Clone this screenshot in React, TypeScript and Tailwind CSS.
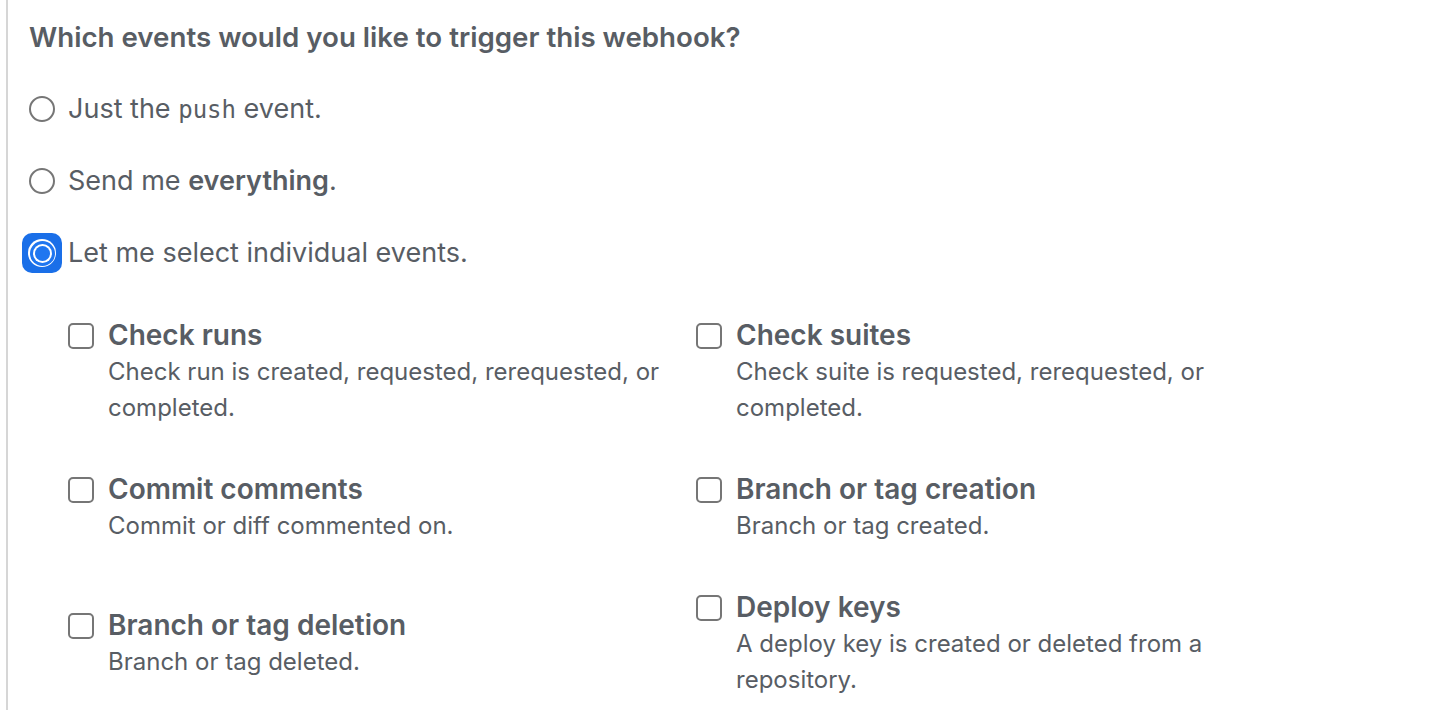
import React from 'react';

type EventItem = { title: string; desc: string; extra?: string };

const leftEvents: EventItem[] = [
  { title: 'Check runs', desc: 'Check run is created, requested, rerequested, or completed.' },
  { title: 'Commit comments', desc: 'Commit or diff commented on.', extra: 'mb-[62px]' },
  { title: 'Branch or tag deletion', desc: 'Branch or tag deleted.' },
];

const rightEvents: EventItem[] = [
  { title: 'Check suites', desc: 'Check suite is requested, rerequested, or completed.' },
  { title: 'Branch or tag creation', desc: 'Branch or tag created.' },
  { title: 'Deploy keys', desc: 'A deploy key is created or deleted from a repository.' },
];

const Radio: React.FC<{ checked?: boolean }> = ({ checked }) =>
  checked ? (
    <span className="-ml-[7px] mr-[-7px] flex h-[40px] w-[40px] shrink-0 items-center justify-center rounded-[10px] bg-[#1a6fe8]">
      <span className="flex h-[28px] w-[28px] items-center justify-center rounded-full bg-white">
        <span className="flex h-[25px] w-[25px] items-center justify-center rounded-full bg-[#1f76f0]">
          <span className="flex h-[19px] w-[19px] items-center justify-center rounded-full bg-white">
            <span className="h-[15px] w-[15px] rounded-full bg-[#1f76f0]" />
          </span>
        </span>
      </span>
    </span>
  ) : (
    <span className="h-[26px] w-[26px] shrink-0 rounded-full border-2 border-[#767676] bg-white" />
  );

const RadioRow: React.FC<{ checked?: boolean; children: React.ReactNode }> = ({ checked, children }) => (
  <label className="flex h-[72px] items-center gap-[13px]">
    <Radio checked={checked} />
    <span className="text-[27px]">{children}</span>
  </label>
);

const EventCheck: React.FC<{ item: EventItem }> = ({ item }) => (
  <div className={`flex gap-[14px] ${item.extra ?? 'mb-[44px]'}`}>
    <span className="mt-[7px] h-[26px] w-[26px] shrink-0 rounded-[5px] border-2 border-[#767676] bg-white" />
    <div>
      <div className="text-[28px] font-semibold leading-[38px]">{item.title}</div>
      <div className="max-w-[560px] text-[24px] leading-[36px]">{item.desc}</div>
    </div>
  </div>
);

export default function App() {
  return (
    <div
      className="min-h-[710px] w-[1452px] bg-white pl-[6px] text-[#585d64]"
      style={{ fontFamily: 'Inter, "Liberation Sans", sans-serif' }}
    >
      <div className="min-h-[710px] border-l-2 border-[#d6d6d6] pl-[21px] pt-[18px]">
        <div className="text-[27.7px] font-semibold leading-[38px]">Which events would you like to trigger this webhook?</div>
        <div className="mt-[17px] flex flex-col">
          <RadioRow>
            Just the <code className="text-[24px]" style={{ fontFamily: '"DejaVu Sans Mono", monospace' }}>push</code> event.
          </RadioRow>
          <RadioRow>
            Send me <strong className="font-semibold">everything</strong>.
          </RadioRow>
          <RadioRow checked>Let me select individual events.</RadioRow>
        </div>
        <div className="ml-[39px] mt-[27px] grid grid-cols-[628px_628px]">
          <div className="flex flex-col">
            {leftEvents.map((e) => (
              <EventCheck key={e.title} item={e} />
            ))}
          </div>
          <div className="flex flex-col">
            {rightEvents.map((e) => (
              <EventCheck key={e.title} item={e} />
            ))}
          </div>
        </div>
      </div>
    </div>
  );
}
